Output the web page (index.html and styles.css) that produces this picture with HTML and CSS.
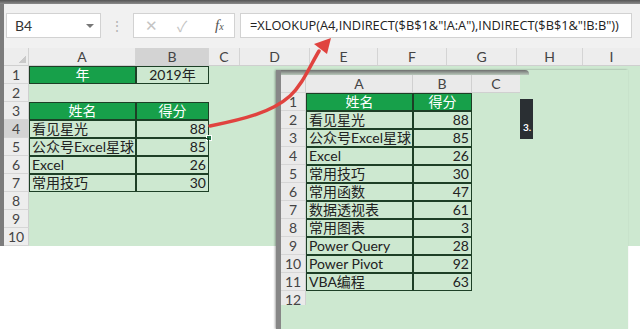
FILE: index.html
```html
<!DOCTYPE html>
<html lang="zh-CN">
  <head>
    <meta charset="UTF-8" />
    <meta name="viewport" content="width=device-width, initial-scale=1.0" />
    <title>XLOOKUP INDIRECT</title>
    <link rel="stylesheet" href="styles.css">
  </head>
  <body>
    <div class="screen">
      <div class="chrome"></div>

      <div class="formula-row">
        <div class="namebox">
          <span>B4</span>
          <span class="caret"></span>
        </div>
        <div class="grip">⋮</div>
        <div class="fbtns">
          <span class="cancel">✕</span>
          <span class="enter">✓</span>
          <span class="fx">f<small>x</small></span>
        </div>
        <div class="finput">=XLOOKUP(A4,INDIRECT($B$1&amp;"!A:A"),INDIRECT($B$1&amp;"!B:B"))</div>
      </div>

      <div class="sheet">
        <div class="col-head">
          <div class="corner"></div>
          <div class="ch w-a">A</div>
          <div class="ch w-b sel">B</div>
          <div class="ch w-c">C</div>
          <div class="ch w-d">D</div>
          <div class="ch w-e">E</div>
          <div class="ch w-f">F</div>
          <div class="ch w-g">G</div>
          <div class="ch w-h">H</div>
          <div class="ch w-i">I</div>
        </div>

        <div class="row">
          <div class="rh">1</div>
          <div class="cell w-a boxed head">年</div>
          <div class="cell w-b boxed center">2019年</div>
        </div>
        <div class="row">
          <div class="rh">2</div>
        </div>
        <div class="row">
          <div class="rh">3</div>
          <div class="cell w-a boxed head">姓名</div>
          <div class="cell w-b boxed head">得分</div>
        </div>
        <div class="row">
          <div class="rh sel">4</div>
          <div class="cell w-a boxed">看见星光</div>
          <div class="cell w-b boxed num active">88<span class="handle"></span></div>
        </div>
        <div class="row">
          <div class="rh">5</div>
          <div class="cell w-a boxed">公众号Excel星球</div>
          <div class="cell w-b boxed num">85</div>
        </div>
        <div class="row">
          <div class="rh">6</div>
          <div class="cell w-a boxed">Excel</div>
          <div class="cell w-b boxed num">26</div>
        </div>
        <div class="row">
          <div class="rh">7</div>
          <div class="cell w-a boxed">常用技巧</div>
          <div class="cell w-b boxed num">30</div>
        </div>
        <div class="row">
          <div class="rh">8</div>
        </div>
        <div class="row">
          <div class="rh">9</div>
        </div>
        <div class="row">
          <div class="rh">10</div>
        </div>
      </div>

      <!-- pasted screenshot of the data sheet -->
      <div class="paste">
        <div class="paste-top"></div>
        <div class="paste-grid">
          <div class="prow">
            <div class="prh corner"></div>
            <div class="pch p-a">A</div>
            <div class="pch p-b">B</div>
            <div class="pch p-c">C</div>
          </div>
          <div class="prow">
            <div class="prh">1</div>
            <div class="cell p-a boxed head">姓名</div>
            <div class="cell p-b boxed head">得分</div>
          </div>
          <div class="prow">
            <div class="prh">2</div>
            <div class="cell p-a boxed">看见星光</div>
            <div class="cell p-b boxed num">88</div>
          </div>
          <div class="prow">
            <div class="prh">3</div>
            <div class="cell p-a boxed">公众号Excel星球</div>
            <div class="cell p-b boxed num">85</div>
          </div>
          <div class="prow">
            <div class="prh">4</div>
            <div class="cell p-a boxed">Excel</div>
            <div class="cell p-b boxed num">26</div>
          </div>
          <div class="prow">
            <div class="prh">5</div>
            <div class="cell p-a boxed">常用技巧</div>
            <div class="cell p-b boxed num">30</div>
          </div>
          <div class="prow">
            <div class="prh">6</div>
            <div class="cell p-a boxed">常用函数</div>
            <div class="cell p-b boxed num">47</div>
          </div>
          <div class="prow">
            <div class="prh">7</div>
            <div class="cell p-a boxed">数据透视表</div>
            <div class="cell p-b boxed num">61</div>
          </div>
          <div class="prow">
            <div class="prh">8</div>
            <div class="cell p-a boxed">常用图表</div>
            <div class="cell p-b boxed num">3</div>
          </div>
          <div class="prow">
            <div class="prh">9</div>
            <div class="cell p-a boxed">Power Query</div>
            <div class="cell p-b boxed num">28</div>
          </div>
          <div class="prow">
            <div class="prh">10</div>
            <div class="cell p-a boxed">Power Pivot</div>
            <div class="cell p-b boxed num">92</div>
          </div>
          <div class="prow">
            <div class="prh">11</div>
            <div class="cell p-a boxed">VBA编程</div>
            <div class="cell p-b boxed num">63</div>
          </div>
          <div class="prow">
            <div class="prh">12</div>
          </div>
        </div>
        <div class="tip">3.</div>
      </div>

      <svg class="arrow" width="640" height="329" viewBox="0 0 640 329">
        <path d="M210 126 C 245 119 272 112 290 96 C 302 85 309 68 319 51" fill="none" stroke="#e0433f" stroke-width="3.5" stroke-linecap="round" />
        <polygon points="331,38 327,54 314,44" fill="#e0433f" />
      </svg>
    </div>
  </body>
</html>
```

FILE: styles.css
```css
* {
  box-sizing: border-box;
  margin: 0;
  padding: 0;
}

body {
  background: #fff;
  font-family: Lato, "Noto Sans CJK SC", sans-serif;
  color: #222;
}

.screen {
  position: relative;
  width: 640px;
  height: 329px;
  overflow: hidden;
  background: #fff;
}

.chrome {
  height: 4px;
  background: linear-gradient(#555, #8c8c8c);
}

/* formula bar */
.formula-row {
  height: 44px;
  display: flex;
  align-items: flex-start;
  padding: 9px 0 0 2px;
  background: #f1f1f1;
  border-left: 4px solid #7c7c7c;
}

.namebox {
  width: 95px;
  height: 25px;
  background: #fff;
  border: 1px solid #d2d2d2;
  display: flex;
  align-items: center;
  justify-content: space-between;
  padding: 0 6px 0 8px;
  font-size: 14px;
  color: #333;
}

.caret {
  width: 0;
  height: 0;
  border-left: 4px solid transparent;
  border-right: 4px solid transparent;
  border-top: 4px solid #777;
}

.grip {
  width: 32px;
  height: 25px;
  text-align: center;
  line-height: 25px;
  color: #b5b5b5;
  font-size: 14px;
}

.fbtns {
  width: 102px;
  height: 25px;
  background: #fff;
  border: 1px solid #d2d2d2;
  display: flex;
  align-items: center;
  padding-left: 11px;
  color: #c4c4c4;
  font-size: 15px;
}

.fbtns .cancel {
  width: 32px;
}

.fbtns .enter {
  width: 38px;
}

.fbtns .fx {
  font-family: "Liberation Serif", serif;
  font-style: italic;
  color: #555;
  font-size: 15px;
}

.fbtns .fx small {
  font-size: 10px;
}

.finput {
  width: 392px;
  height: 25px;
  margin-left: 5px;
  background: #fff;
  border: 1px solid #d2d2d2;
  padding-left: 9px;
  line-height: 23px;
  font-family: "Open Sans", sans-serif;
  font-size: 12.8px;
  color: #222;
  white-space: nowrap;
}

/* main sheet */
.sheet {
  border-left: 4px solid #7c7c7c;
  background: #cde8d0;
}

.col-head,
.row {
  display: flex;
  height: 18px;
}

.col-head {
  background: #ededed;
  border-bottom: 1px solid #cfcfcf;
}

.corner {
  width: 25px;
  flex-shrink: 0;
  background: linear-gradient(135deg, transparent 60%, #c9c9c9 60%) no-repeat right 2px bottom 2px / 9px 9px, #ededed;
  border-right: 1px solid #d2d2d2;
}

.ch {
  text-align: center;
  font-size: 14px;
  line-height: 17px;
  color: #444;
  border-right: 1px solid #d4d4d4;
}

.ch.sel {
  background: #d3d3d3;
}

.w-a { width: 107px; }
.w-b { width: 73px; }
.w-c { width: 31px; }
.w-d { width: 70px; }
.w-e { width: 68px; }
.w-f { width: 69px; }
.w-g { width: 70px; }
.w-h { width: 66px; }
.w-i { flex: 1; border-right: none; }

.rh {
  width: 25px;
  flex-shrink: 0;
  background: #ededed;
  border-right: 1px solid #cfcfcf;
  border-bottom: 1px solid #d6d6d6;
  text-align: center;
  font-size: 14px;
  line-height: 17px;
  color: #444;
}

.rh.sel {
  background: #d3d3d3;
}

.cell {
  position: relative;
  height: 18px;
  font-size: 14px;
  line-height: 16px;
  padding: 0 2px;
  white-space: nowrap;
  overflow: hidden;
}

.boxed {
  border: 1px solid #1d3f26;
}

.head {
  background: #17a04a;
  color: #fff;
  text-align: center;
}

.center {
  text-align: center;
}

.num {
  text-align: right;
  padding-right: 2px;
}

.active {
  overflow: visible;
}

.handle {
  position: absolute;
  right: -4px;
  bottom: -4px;
  width: 6px;
  height: 6px;
  background: #217346;
  border: 1px solid #fff;
}

/* pasted picture */
.paste {
  position: absolute;
  left: 276px;
  top: 70px;
  width: 352px;
  height: 259px;
  background: #cde8d0;
  border-left: 5px solid #878787;
  box-shadow: -1px 0 2px rgba(0, 0, 0, 0.35);
}

.paste-top {
  width: 248px;
  height: 5px;
  background: linear-gradient(#6f6f6f, #b9c9bb);
  border-top-right-radius: 4px;
}

.paste-grid {
  height: 230px;
  overflow: hidden;
}

.prow {
  display: flex;
  height: 18px;
}

.prh {
  width: 25px;
  flex-shrink: 0;
  background: #eaeaea;
  border-right: 1px solid #d0d0d0;
  border-bottom: 1px solid #d6d6d6;
  text-align: center;
  font-size: 14px;
  line-height: 17px;
  color: #444;
}

.pch {
  background: #eaeaea;
  border-right: 1px solid #d0d0d0;
  border-bottom: 1px solid #d0d0d0;
  text-align: center;
  font-size: 14px;
  line-height: 17px;
  color: #444;
}

.p-a { width: 107px; }
.p-b { width: 59px; }
.p-c { width: 48px; border-right: none; }

.tip {
  position: absolute;
  left: 239px;
  top: 29px;
  width: 13px;
  height: 40px;
  background: #2a2f33;
  color: #fff;
  font-size: 10px;
  font-weight: bold;
  line-height: 12px;
  padding: 22px 0 0 3px;
  overflow: hidden;
}

.arrow {
  position: absolute;
  left: 0;
  top: 0;
  pointer-events: none;
}
```
